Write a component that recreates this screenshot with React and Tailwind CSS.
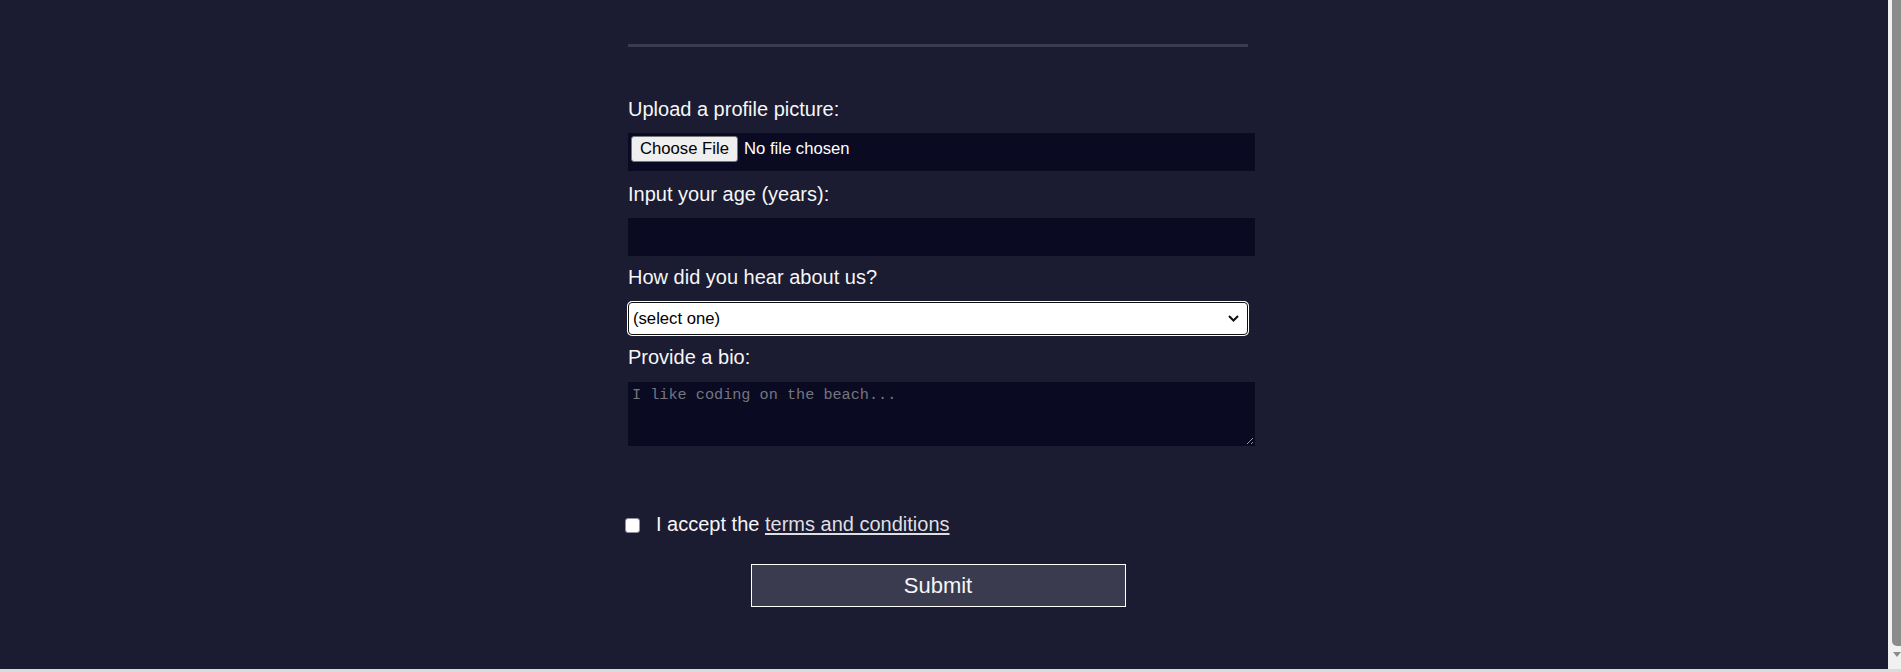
import React, { useState } from 'react';

const sans = "font-['Liberation_Sans',Arial,sans-serif]";

const FieldLabel = ({ children, className = '' }) => (
    <label className={`block text-[20px] leading-[24px] text-[#f5f6f7] ${className}`}>{children}</label>
);

const App = () => {
    const [age, setAge] = useState('');
    const [source, setSource] = useState('');
    const [bio, setBio] = useState('');
    const [accepted, setAccepted] = useState(false);

    return (
        <div className={`w-full h-[672px] overflow-hidden flex flex-col bg-[#1b1b32] ${sans}`}>
            <div className="flex flex-1 min-h-0">
                <main className="flex-1">
                    <form className="ml-[628px] w-[620px] flex flex-col" onSubmit={(e) => e.preventDefault()}>
                        {/* end of the previous fieldset */}
                        <div className="h-[47px] border-b-[3px] border-[#3b3b4f]" />

                        <FieldLabel className="mt-[50px]">Upload a profile picture:</FieldLabel>
                        <div className="mt-[12px] w-[627px] h-[38px] bg-[#0a0a23] pt-[3px] pl-[3px]">
                            <div className="flex items-center h-[26px]">
                                <button
                                    type="button"
                                    className="w-[107px] h-[26px] flex items-center justify-center bg-[#efefef] border border-[#767676] rounded-[3px] text-[16.67px] leading-none text-black"
                                >
                                    Choose File
                                </button>
                                <span className="ml-[6px] text-[16.67px] leading-none text-white">No file chosen</span>
                            </div>
                        </div>

                        <FieldLabel className="mt-[11px]">Input your age (years):</FieldLabel>
                        <input
                            type="number"
                            value={age}
                            onChange={(e) => setAge(e.target.value)}
                            className="mt-[12px] w-[627px] h-[38px] bg-[#0a0a23] border border-[#0a0a23] px-[2px] text-[16.67px] text-white outline-none"
                        />

                        <FieldLabel className="mt-[9px]">How did you hear about us?</FieldLabel>
                        <div className="relative mt-[13px] w-[620px] h-[33px]">
                            <select
                                value={source}
                                onChange={(e) => setSource(e.target.value)}
                                className="appearance-none w-full h-full bg-white border-[1.5px] border-[#101010] rounded-[4px] shadow-[0_0_0_1px_#ffffff] pl-[4px] text-[16.67px] text-black outline-none"
                            >
                                <option value="">(select one)</option>
                                <option value="1">freeCodeCamp News</option>
                                <option value="2">freeCodeCamp YouTube Channel</option>
                                <option value="3">freeCodeCamp Forum</option>
                                <option value="4">Other</option>
                            </select>
                            <svg className="absolute right-[9px] top-[13px] pointer-events-none" width="11" height="7" viewBox="0 0 11 7">
                                <path d="M1 1 L5.5 5.5 L10 1" fill="none" stroke="#101010" strokeWidth="2" />
                            </svg>
                        </div>

                        <FieldLabel className="mt-[10px]">Provide a bio:</FieldLabel>
                        <textarea
                            value={bio}
                            onChange={(e) => setBio(e.target.value)}
                            placeholder="I like coding on the beach..."
                            className="mt-[13px] w-[627px] h-[64px] bg-[#0a0a23] border border-[#0a0a23] px-[3px] pt-[1px] font-['Liberation_Mono',monospace] text-[15.2px] text-white placeholder:text-[#75757e] outline-none"
                        />

                        <label className="mt-[66px] flex items-start h-[24px] text-[20px] leading-[24px] text-[#f5f6f7]">
                            <input
                                type="checkbox"
                                checked={accepted}
                                onChange={(e) => setAccepted(e.target.checked)}
                                className="appearance-none -ml-[3px] mt-[6px] w-[15px] h-[15px] bg-white border border-[#8f8f9d] rounded-[3px] shrink-0"
                            />
                            <span className="ml-[16px] whitespace-nowrap">
                                I accept the <a href="#" className="text-[#dfdfe2] underline underline-offset-[2px]">terms and conditions</a>
                            </span>
                        </label>

                        <button
                            type="submit"
                            className="mt-[28px] mx-auto w-[375px] h-[43px] bg-[#3b3b4f] border border-white text-[22px] text-[#f5f6f7]"
                        >
                            Submit
                        </button>
                    </form>
                </main>

                {/* scrollbar, cut at the window edge */}
                <div className="w-[13px] flex flex-col bg-[#f1f1f1] pl-[4px]">
                    <div className="h-[646px] bg-[#8b8b8b] rounded-bl-[5px]" />
                    <svg className="mt-[6px] ml-[1px]" width="8" height="6" viewBox="0 0 8 6">
                        <path d="M0 0 H8 L4 5 Z" fill="#8b8b8b" />
                    </svg>
                </div>
            </div>
            <div className="h-[3px] bg-[#dcdcdc]" />
        </div>
    );
};

export default App;
